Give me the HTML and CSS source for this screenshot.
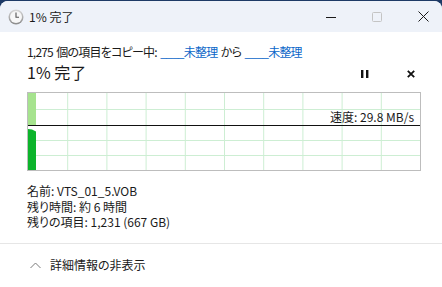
FILE: index.html
```
<!DOCTYPE html>
<html lang="ja">
<head>
<meta charset="UTF-8">
<title>1% 完了</title>
<link rel="stylesheet" href="styles.css">
</head>
<body>
<div class="window">
	<div class="titlebar">
		<svg class="app_icon" width="16" height="16" viewBox="0 0 16 16">
			<defs>
				<linearGradient id="rim" x1="0" y1="0" x2="0" y2="1">
					<stop offset="0" stop-color="#d8d8d8"/>
					<stop offset="1" stop-color="#8a8a8a"/>
				</linearGradient>
			</defs>
			<circle cx="8" cy="8" r="7.5" fill="url(#rim)"/>
			<circle cx="8" cy="8" r="6" fill="#f7f7f7"/>
			<path d="M8 3.6V8.3H11" fill="none" stroke="#555" stroke-width="1.1"/>
		</svg>
		<span class="title">1% 完了</span>
		<div class="controls">
			<span class="ctl ctl_min"><svg width="10" height="10" viewBox="0 0 10 10"><path d="M0 5.5H10" stroke="#1a1a1a" stroke-width="1"/></svg></span>
			<span class="ctl ctl_max"><svg width="10" height="10" viewBox="0 0 10 10"><rect x="0.5" y="0.5" width="9" height="9" rx="1" fill="none" stroke="#c4c4c4"/></svg></span>
			<span class="ctl ctl_close"><svg width="11" height="11" viewBox="0 0 11 11"><path d="M0.5 0.5L10.5 10.5M10.5 0.5L0.5 10.5" stroke="#1a1a1a" stroke-width="1"/></svg></span>
		</div>
	</div>

	<div class="content">
		<p class="summary">1,275 個の項目をコピー中: <a href="#">____未整理</a> から <a href="#">____未整理</a></p>
		<div class="status">
			<h1>1% 完了</h1>
			<div class="actions">
				<a class="pause" href="javascript:;"><svg width="8" height="8" viewBox="0 0 8 8"><rect x="0" y="0" width="2.4" height="8" fill="#111"/><rect x="5" y="0" width="2.4" height="8" fill="#111"/></svg></a>
				<a class="cancel" href="javascript:;"><svg width="8" height="8" viewBox="0 0 8 8"><path d="M0.8 0.8L7.2 7.2M7.2 0.8L0.8 7.2" stroke="#111" stroke-width="1.8"/></svg></a>
			</div>
		</div>

		<div class="chart">
			<svg width="392" height="77" viewBox="0 0 392 77">
				<g stroke="#cdeed3" stroke-width="1">
					<path d="M39.7 0V77M78.9 0V77M118.1 0V77M157.3 0V77M196.5 0V77M235.7 0V77M274.9 0V77M314.1 0V77M353.3 0V77"/>
					<path d="M0 16.5H392M0 47.5H392M0 62.5H392"/>
				</g>
				<rect x="0" y="0" width="8" height="32" fill="#a6e38e"/>
				<polygon points="0,36 4,36.5 6,37.5 8,38.5 8,77 0,77" fill="#0cb42b"/>
				<path d="M0 32.5H392" stroke="#111" stroke-width="1.2"/>
			</svg>
			<span class="speed">速度: 29.8 MB/s</span>
		</div>

		<ul class="details">
			<li>名前: VTS_01_5.VOB</li>
			<li>残り時間: 約 6 時間</li>
			<li>残りの項目: 1,231 (667 GB)</li>
		</ul>
	</div>

	<div class="footer">
		<svg width="11" height="7" viewBox="0 0 11 7"><path d="M0.5 6L5.5 1L10.5 6" fill="none" stroke="#7a7a7a" stroke-width="1"/></svg>
		<span>詳細情報の非表示</span>
	</div>
</div>
</body>
</html>
```

FILE: styles.css
```
* { margin: 0; padding: 0; }
html, body { width: 442px; height: 287px; overflow: hidden; }
body { background: #1d3a66; font-family: "Noto Sans CJK JP", "Noto Sans", sans-serif; font-size: 12px; color: #1a1a1a; font-feature-settings: "palt"; }
a { color: #0a66c8; text-decoration: none; }
li { list-style: none; }

.window { margin-top: 1px; height: 286px; background: #fff; border-radius: 8px 8px 0 0; overflow: hidden; display: flex; flex-direction: column; }

.titlebar { height: 31px; background: #eef2f9; display: flex; align-items: center; padding-left: 8px; }
.app_icon { margin-right: 5px; }
.title { flex: 1; font-size: 12px; line-height: 16px; }
.controls { display: flex; height: 100%; }
.ctl { width: 46px; display: flex; align-items: center; justify-content: center; }
.ctl_close { width: 42px; justify-content: flex-start; padding-left: 18px; box-sizing: border-box; }

.content { padding: 12px 22px 0 27px; }
.summary { line-height: 16px; letter-spacing: -0.8px; word-spacing: 1.5px; }
.status { display: flex; align-items: center; height: 22px; margin-top: 1px; }
.status h1 { flex: 1; font-size: 16px; font-weight: normal; line-height: 22px; }
.actions { display: flex; align-items: center; padding-top: 4px; }
.actions a { display: flex; }
.pause { margin-right: 38px; }
.cancel { margin-right: 5px; }

.chart { position: relative; margin-top: 9px; width: 392px; height: 77px; border: 1px solid #bdbdbd; }
.chart svg { display: block; }
.speed { position: absolute; right: 6px; top: 16px; line-height: 15px; }

.details { margin-top: 12px; line-height: 15.5px; }

.footer { margin-top: auto; height: 43px; border-top: 1px solid #e6e6e6; display: flex; align-items: center; padding-left: 30px; gap: 9px; }
.footer span { line-height: 16px; padding-bottom: 1px; }
```
